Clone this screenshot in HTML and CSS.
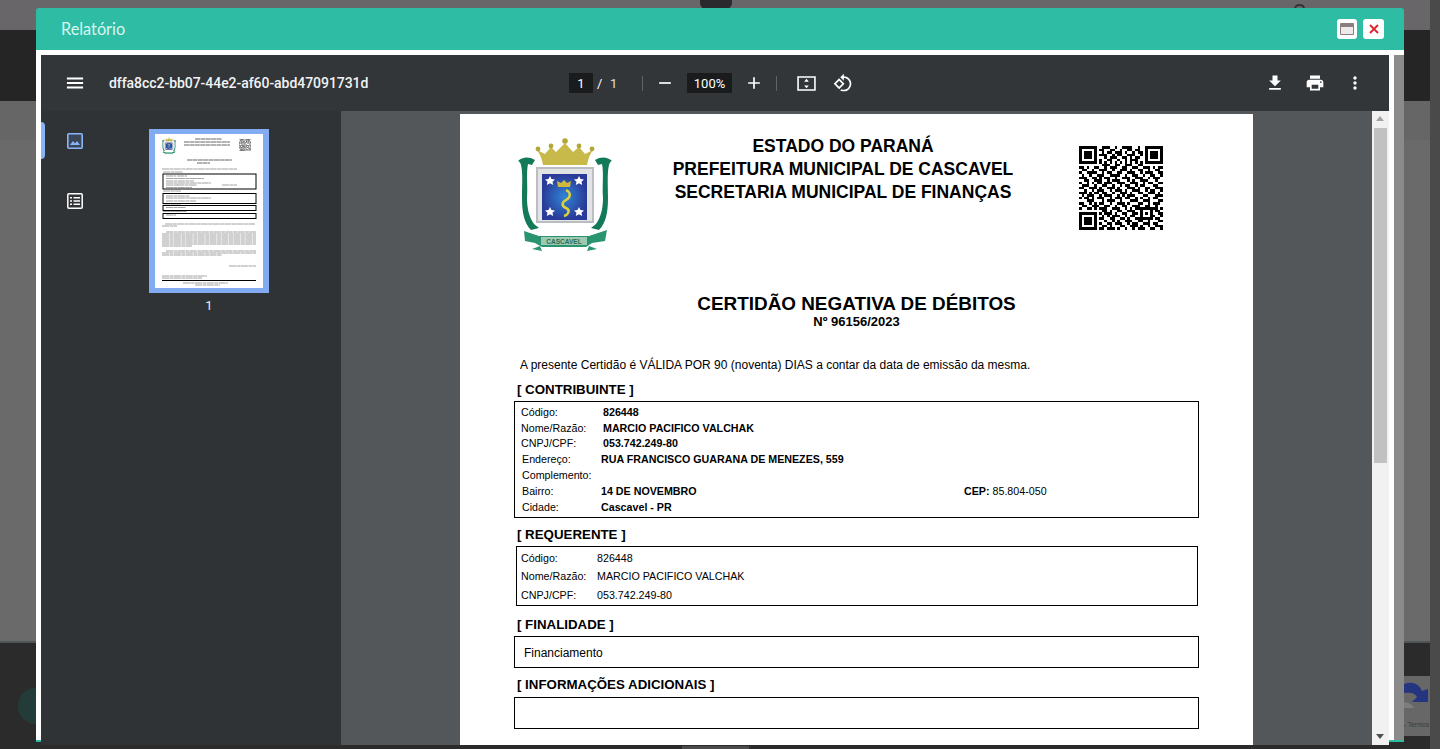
FILE: index.html
```html
<!DOCTYPE html>
<html lang="pt-BR">
<head>
<meta charset="utf-8">
<title>Relatório</title>
<link rel="stylesheet" href="styles.css">
</head>
<body>
<svg class="defs" aria-hidden="true">
  <radialGradient id="shield">
    <stop offset="0" stop-color="#2f86d6"/>
    <stop offset="1" stop-color="#2a3a98"/>
  </radialGradient>
  <symbol id="seal" viewBox="515 136 100 120">
    <path d="M518 161c4-4 11-5 17-1l-3 5-4-1c-2 9 0 22-1 34 0 10 2 19 7 26l5 4-8 2c-7-7-9-18-9-32 0-12 1-25-1-33-1-3-2-4-3-4z" fill="#127a58"/>
    <path d="M612 161c-4-4-11-5-17-1l3 5 4-1c2 9 0 22 1 34 0 10-2 19-7 26l-5 4 8 2c7-7 9-18 9-32 0-12-1-25 1-33 1-3 2-4 3-4z" fill="#127a58"/>
    <path d="M524 231l15 5h50l18-6-2 11-13 2-6 4h-44l-7-4-10-2z" fill="#2a9470"/>
    <rect x="541" y="237" width="46" height="8" fill="#9cc9b2"/>
    <path d="M532 249l8-3 2 5zM597 249l-8-3-2 5z" fill="#2a9470"/>
    <path d="M543 165c-1-6-3-11-6-15l8 4 6-7 5 5 9-9 8 9 6-5 6 7 8-4c-3 4-5 9-6 15z" fill="#c7ba4a"/>
    <circle cx="538" cy="149" r="2.400" fill="#b3a739"/><circle cx="551" cy="146" r="2.400" fill="#b3a739"/><circle cx="565" cy="141" r="2.800" fill="#b3a739"/><circle cx="579" cy="146" r="2.400" fill="#b3a739"/><circle cx="592" cy="149" r="2.400" fill="#b3a739"/>
    <rect x="536" y="167" width="58" height="56" fill="#bcbdc0"/>
    <rect x="538" y="169" width="54" height="52" fill="#e2e3e5"/>
    <rect x="542" y="174" width="45" height="46" fill="url(#shield)"/>
    <path d="M550 176l1.500 3 3.500.4-2.500 2.300.7 3.300-3.200-1.700-3.200 1.700.7-3.300-2.500-2.300 3.500-.4zM579 176l1.500 3 3.500.4-2.500 2.300.7 3.300-3.200-1.700-3.200 1.700.7-3.300-2.500-2.300 3.500-.4zM550 207l1.500 3 3.500.4-2.500 2.300.7 3.300-3.200-1.700-3.200 1.700.7-3.300-2.500-2.300 3.500-.4zM579 207l1.500 3 3.500.4-2.500 2.300.7 3.300-3.200-1.700-3.200 1.700.7-3.300-2.500-2.300 3.500-.4z" fill="#fff"/>
    <path d="M558 187l-1-6 4 2 3-3 3 3 4-2-1 6z" fill="#d0b83a"/>
    <path d="M566 190c6 3 4 8 0 10s-5 6 0 8 2 7-2 8" fill="none" stroke="#dcd03e" stroke-width="2.500"/>
  </symbol>
  <symbol id="qr" viewBox="0 0 33 33">
    <path shape-rendering="crispEdges" fill="none" stroke="#000" d="M0 .5h7M9 .5h3M14 .5h1M17 .5h4M23 .5h1M26 .5h7
    M0 1.500h1M6 1.500h1M8 1.500h2M12 1.500h2M16 1.500h1M19 1.500h2M22 1.500h2M26 1.500h1M32 1.500h1
    M0 2.500h1M2 2.500h3M6 2.500h1M9 2.500h1M11 2.500h2M14 2.500h3M18 2.500h1M21 2.500h1M23 2.500h2M26 2.500h1M28 2.500h3M32 2.500h1
    M0 3.500h1M2 3.500h3M6 3.500h1M8 3.500h3M13 3.500h1M15 3.500h2M19 3.500h3M24 3.500h1M26 3.500h1M28 3.500h3M32 3.500h1
    M0 4.500h1M2 4.500h3M6 4.500h1M10 4.500h1M12 4.500h3M17 4.500h2M20 4.500h1M22 4.500h2M26 4.500h1M28 4.500h3M32 4.500h1
    M0 5.500h1M6 5.500h1M8 5.500h1M11 5.500h2M15 5.500h1M18 5.500h1M20 5.500h3M26 5.500h1M32 5.500h1
    M0 6.500h7M8 6.500h1M10 6.500h1M12 6.500h1M14 6.500h1M16 6.500h1M18 6.500h1M20 6.500h1M22 6.500h1M24 6.500h1M26 6.500h7
    M9 7.500h3M14 7.500h2M18 7.500h3M23 7.500h2
    M0 8.500h2M3 8.500h1M6 8.500h2M10 8.500h1M12 8.500h3M17 8.500h2M21 8.500h2M25 8.500h3M29 8.500h1M31 8.500h2
    M1 9.500h2M5 9.500h1M8 9.500h3M13 9.500h1M16 9.500h3M20 9.500h1M23 9.500h2M27 9.500h1M30 9.500h2
    M0 10.500h1M3 10.500h4M9 10.500h1M11 10.500h2M15 10.500h2M19 10.500h3M24 10.500h1M26 10.500h3M31 10.500h2
    M1 11.500h1M4 11.500h1M7 11.500h3M12 11.500h4M18 11.500h1M21 11.500h2M25 11.500h1M28 11.500h2M32 11.500h1
    M0 12.500h3M5 12.500h2M8 12.500h1M10 12.500h2M14 12.500h1M17 12.500h3M22 12.500h3M27 12.500h1M29 12.500h3
    M2 13.500h2M6 13.500h3M11 13.500h1M13 13.500h3M19 13.500h1M21 13.500h1M24 13.500h3M30 13.500h1
    M0 14.500h1M3 14.500h1M5 14.500h1M7 14.500h2M10 14.500h3M15 14.500h3M20 14.500h3M25 14.500h1M27 14.500h2M31 14.500h2
    M1 15.500h3M6 15.500h1M9 15.500h2M13 15.500h1M16 15.500h1M18 15.500h2M22 15.500h1M24 15.500h2M29 15.500h2
    M0 16.500h2M4 16.500h3M8 16.500h1M11 16.500h3M15 16.500h1M19 16.500h3M23 16.500h1M26 16.500h2M30 16.500h3
    M2 17.500h1M5 17.500h1M7 17.500h3M12 17.500h1M14 17.500h3M18 17.500h1M21 17.500h3M26 17.500h1M28 17.500h2M32 17.500h1
    M0 18.500h3M4 18.500h1M6 18.500h2M9 18.500h2M13 18.500h1M16 18.500h3M20 18.500h1M23 18.500h2M27 18.500h3M31 18.500h1
    M1 19.500h1M3 19.500h3M8 19.500h1M10 19.500h3M15 19.500h1M17 19.500h1M19 19.500h3M25 19.500h2M30 19.500h3
    M0 20.500h1M2 20.500h2M5 20.500h1M7 20.500h3M12 20.500h1M14 20.500h3M18 20.500h2M22 20.500h1M24 20.500h1M27 20.500h1M29 20.500h2
    M3 21.500h3M9 21.500h1M11 21.500h3M16 21.500h1M20 21.500h3M25 21.500h3M31 21.500h2
    M0 22.500h2M4 22.500h1M6 22.500h1M8 22.500h2M12 22.500h1M15 22.500h3M19 22.500h1M23 22.500h2M27 22.500h1M29 22.500h3
    M1 23.500h2M5 23.500h3M10 23.500h2M14 23.500h1M17 23.500h2M21 23.500h3M26 23.500h2M30 23.500h1
    M0 24.500h1M3 24.500h2M6 24.500h1M8 24.500h3M13 24.500h3M18 24.500h1M20 24.500h1M22 24.500h9M32 24.500h1
    M9 25.500h2M12 25.500h1M15 25.500h2M19 25.500h3M24 25.500h1M28 25.500h1M30 25.500h2
    M0 26.500h7M8 26.500h1M10 26.500h3M14 26.500h1M17 26.500h2M21 26.500h2M24 26.500h1M26 26.500h1M28 26.500h1M31 26.500h2
    M0 27.500h1M6 27.500h1M9 27.500h1M11 27.500h1M13 27.500h3M18 27.500h1M20 27.500h2M24 27.500h1M28 27.500h2M32 27.500h1
    M0 28.500h1M2 28.500h3M6 28.500h1M8 28.500h2M12 28.500h2M16 28.500h2M19 28.500h1M22 28.500h7M30 28.500h2
    M0 29.500h1M2 29.500h3M6 29.500h1M10 29.500h1M13 29.500h1M15 29.500h1M18 29.500h3M23 29.500h2M27 29.500h1M31 29.500h2
    M0 30.500h1M2 30.500h3M6 30.500h1M8 30.500h1M11 30.500h2M14 30.500h3M19 30.500h1M21 30.500h2M25 30.500h3M29 30.500h2
    M0 31.500h1M6 31.500h1M9 31.500h2M12 31.500h1M16 31.500h2M20 31.500h3M24 31.500h1M27 31.500h1M30 31.500h3
    M0 32.500h7M8 32.500h2M11 32.500h3M15 32.500h1M18 32.500h1M21 32.500h1M23 32.500h3M28 32.500h2M32 32.500h1"/>
  </symbol>
</svg>

<div class="backdrop">
  <div class="page-col">
    <div class="band band-top"><span class="pill"></span></div>
    <div class="band band-nav"></div>
    <div class="band band-sub"></div>
    <div class="band band-main"></div>
    <div class="band band-foot"><span class="foot-mark"></span></div>
  </div>
  <div class="page-scroll"></div>
</div>
<span class="top-mark"></span>
<span class="chat-dot"></span>
<div class="recaptcha">
  <svg viewBox="0 0 26 30" width="26" height="30"><path d="M0 4c9-3 15 0 18 7l6-2v13H8l5-5c-2-4-6-5-13-4z" fill="#26357f"/><path d="M0 22c5 1 8 2 10 6H0z" fill="#7d7d7d"/></svg>
  <span class="recaptcha-text">- Termos</span>
</div>

<div class="modal">
  <header class="modal-head">
    <span class="modal-title">Relatório</span>
    <div class="modal-actions">
      <button class="win-btn"><svg viewBox="0 0 14 12" width="14" height="12"><path d="M0 1a1 1 0 0 1 1-1h12a1 1 0 0 1 1 1v10a1 1 0 0 1-1 1H1a1 1 0 0 1-1-1zm1 3v7h12V4z" fill="#8a7f7f"/><path d="M1 4h12v7H1z" fill="#eceaea"/></svg></button>
      <button class="win-btn"><svg viewBox="0 0 10 10" width="10" height="10"><path d="M1 1l8 8M9 1l-8 8" stroke="#e0202c" stroke-width="1.800" fill="none"/></svg></button>
    </div>
  </header>
  <div class="modal-body">
    <div class="viewer">
      <div class="toolbar">
        <div class="tb-left">
          <svg class="tb-ico menu" viewBox="0 0 24 24"><path d="M3 18h18v-2H3v2zm0-5h18v-2H3v2zm0-7v2h18V6H3z"/></svg>
          <span class="doc-name">dffa8cc2-bb07-44e2-af60-abd47091731d</span>
        </div>
        <div class="tb-center">
          <span class="num-box page-box">1</span>
          <span class="slash">/</span>
          <span class="total">1</span>
          <span class="tb-sep sep-a"></span>
          <svg class="tb-ico minus" viewBox="0 0 24 24"><path d="M5 11h14v2H5z"/></svg>
          <span class="num-box zoom-box">100%</span>
          <svg class="tb-ico plus" viewBox="0 0 24 24"><path d="M19 13h-6v6h-2v-6H5v-2h6V5h2v6h6v2z"/></svg>
          <span class="tb-sep sep-b"></span>
          <svg class="tb-ico fit" viewBox="0 0 20 16"><path d="M1 1h18v14H1z" fill="none" stroke="#fff" stroke-width="1.700"/><path d="M10 3l2.500 3h-5zM10 13l-2.500-3h5z"/></svg>
          <svg class="tb-ico rotate" viewBox="0 0 24 24"><path d="M7.340 6.410L.860 12.900l6.490 6.480 6.490-6.480-6.500-6.490zM3.690 12.900l3.660-3.660L11 12.900l-3.660 3.660-3.650-3.660zm15.670-6.260C17.610 4.880 15.300 4 13 4V.760L8.760 5 13 9.240V6c1.790 0 3.580.680 4.950 2.050 2.730 2.730 2.730 7.170 0 9.900C16.580 19.320 14.790 20 13 20c-.970 0-1.940-.210-2.840-.610l-1.490 1.490C10.020 21.620 11.510 22 13 22c2.300 0 4.610-.880 6.360-2.640 3.520-3.510 3.520-9.210 0-12.720z"/></svg>
        </div>
        <div class="tb-right">
          <svg class="tb-ico" viewBox="0 0 24 24"><path d="M19 9h-4V3H9v6H5l7 7 7-7zM5 18v2h14v-2H5z"/></svg>
          <svg class="tb-ico" viewBox="0 0 24 24"><path d="M19 8H5c-1.660 0-3 1.340-3 3v6h4v4h12v-4h4v-6c0-1.660-1.340-3-3-3zm-3 11H8v-5h8v5zm3-7c-.550 0-1-.450-1-1s.450-1 1-1 1 .450 1 1-.450 1-1 1zm-1-9H6v4h12V3z"/></svg>
          <svg class="tb-ico" viewBox="0 0 24 24"><path d="M12 8c1.100 0 2-.900 2-2s-.900-2-2-2-2 .900-2 2 .900 2 2 2zm0 2c-1.100 0-2 .900-2 2s.900 2 2 2 2-.900 2-2-.900-2-2-2zm0 6c-1.100 0-2 .900-2 2s.900 2 2 2 2-.900 2-2-.900-2-2-2z"/></svg>
        </div>
      </div>
      <div class="workspace">
        <aside class="sidebar">
          <div class="rail">
            <div class="rail-btn active">
              <svg viewBox="0 0 16 16" width="16" height="16"><rect x=".8" y=".8" width="14.400" height="14.400" rx="1" fill="#3a4657" stroke="#8ab4f8" stroke-width="1.600"/><path d="M3 12l3-4 2 2.500L10 8l3 4z" fill="#8ab4f8"/></svg>
            </div>
            <div class="rail-btn">
              <svg viewBox="0 0 16 16" width="16" height="16"><rect x=".8" y=".8" width="14.400" height="14.400" rx="1" fill="none" stroke="#fff" stroke-width="1.500"/><path d="M3 4h2v1.500H3zM6.500 4H13v1.500H6.500zM3 7.300h2v1.500H3zM6.500 7.300H13v1.500H6.500zM3 10.600h2v1.500H3zM6.500 10.600H13v1.500H6.500z" fill="#fff"/></svg>
            </div>
          </div>
          <div class="thumb-pane">
            <svg class="thumb" viewBox="149 129 120 164" width="120" height="164">
              <rect x="149" y="129" width="120" height="164" fill="#83abf2"/>
              <rect x="155" y="134" width="108" height="154" fill="#fff"/>
              <use href="#seal" x="161" y="137" width="16" height="18"/>
              <use href="#qr" class="thumb-qr" x="239" y="139" width="12" height="12"/>
              <g class="thumb-head">
                <path d="M195 139h27M184 142h46M184 145h46M187 160h45M197 163h13"/>
              </g>
              <g class="thumb-text">
                <path d="M162 169h75M163 172h20M163 191h18M163 204h18M163 211.500h24M166 176h10M177 176h10M166 178.500h38M166 181h28M166 183h45M166 185h12M177 185h20M222 185h15M166 187.500h26M166 196h24M166 198h45M166 201h30M166 207.500h20M166 215h10"/>
                <path d="M165 224h90M162 226h15M166 232h90M162 234h94M162 236h94M162 238h94M162 240h94M162 242h94M162 244h94M162 246h30M166 251h90M162 253h94M162 255h60M229 266h27M162 276h45M162 278h40M183 283h45M195 285h25"/>
              </g>
              <g class="thumb-boxes">
                <rect x="163" y="174" width="93" height="15"/>
                <rect x="163" y="193.500" width="93" height="10"/>
                <rect x="163" y="205.500" width="93" height="5"/>
                <rect x="163" y="213.500" width="93" height="5"/>
              </g>
              <path d="M162 280.500h94" stroke="#000" stroke-width="1"/>
            </svg>
            <span class="thumb-num">1</span>
          </div>
        </aside>
        <main class="stage">
          <article class="sheet">
            <div class="sheet-head">
              <svg class="seal" viewBox="515 136 100 120">
                <use href="#seal" x="515" y="136" width="100" height="120"/>
                <text x="564" y="244" class="seal-label">CASCAVEL</text>
              </svg>
              <div class="gov">
                <div>ESTADO DO PARANÁ</div>
                <div>PREFEITURA MUNICIPAL DE CASCAVEL</div>
                <div>SECRETARIA MUNICIPAL DE FINANÇAS</div>
              </div>
              <svg class="qr"><use href="#qr"/></svg>
            </div>
            <h1 class="doc-title">CERTIDÃO NEGATIVA DE DÉBITOS</h1>
            <div class="doc-no">Nº 96156/2023</div>
            <p class="lead">A presente Certidão é VÁLIDA POR 90 (noventa) DIAS a contar da data de emissão da mesma.</p>

            <h2 class="sec sec-a">[ CONTRIBUINTE ]</h2>
            <div class="box box-a">
              <div class="row"><span class="lbl">Código:</span><b>826448</b></div>
              <div class="row"><span class="lbl">Nome/Razão:</span><b>MARCIO PACIFICO VALCHAK</b></div>
              <div class="row"><span class="lbl">CNPJ/CPF:</span><b>053.742.249-80</b></div>
              <div class="row shift"><span class="lbl">Endereço:</span><b>RUA FRANCISCO GUARANA DE MENEZES, 559</b></div>
              <div class="row shift"><span class="lbl">Complemento:</span></div>
              <div class="row shift"><span class="lbl">Bairro:</span><b class="val-wide">14 DE NOVEMBRO</b><span><b>CEP:</b> 85.804-050</span></div>
              <div class="row shift"><span class="lbl">Cidade:</span><b>Cascavel - PR</b></div>
            </div>

            <h2 class="sec sec-b">[ REQUERENTE ]</h2>
            <div class="box box-b">
              <div class="row"><span class="lbl">Código:</span><span>826448</span></div>
              <div class="row"><span class="lbl">Nome/Razão:</span><span>MARCIO PACIFICO VALCHAK</span></div>
              <div class="row"><span class="lbl">CNPJ/CPF:</span><span>053.742.249-80</span></div>
            </div>

            <h2 class="sec sec-c">[ FINALIDADE ]</h2>
            <div class="box box-c">Financiamento</div>

            <h2 class="sec sec-d">[ INFORMAÇÕES ADICIONAIS ]</h2>
            <div class="box box-d"></div>
          </article>
        </main>
        <div class="inner-scroll">
          <span class="arrow up"></span>
          <span class="inner-thumb"></span>
          <span class="arrow down"></span>
        </div>
      </div>
    </div>
    <div class="outer-scroll"></div>
  </div>
</div>
</body>
</html>
```
FILE: styles.css
```css
* { box-sizing: border-box; }
html, body { margin: 0; height: 749px; overflow: hidden; }
body { position: relative; background: #2b2b2b; font-family: "Liberation Sans", Arial, sans-serif; }
.defs { position: absolute; width: 0; height: 0; }

/* dimmed page behind the dialog */
.backdrop { display: flex; height: 749px; }
.page-col { flex: 1; display: flex; flex-direction: column; }
.page-scroll { width: 10px; background: #4a4a4a; }
.band { flex: none; }
.band-top { height: 30px; background: #686668; display: flex; justify-content: center; }
.pill { width: 32px; height: 9px; margin-left: 1px; background: #2a2a2e; border-radius: 0 0 6px 6px; }
.band-nav { height: 71px; background: #262525; }
.band-sub { height: 39px; background: #666; }
.band-main { height: 503px; background: #6a6a6a; border-bottom: 2px solid #4f5557; }
.band-foot { height: 106px; background: #2c2b2b; display: flex; justify-content: center; align-items: flex-end; }
.foot-mark { width: 67px; height: 3px; margin-bottom: 0; background: #4a4a4a; }
.top-mark { position: absolute; left: 1294px; top: 4px; width: 11px; height: 5px; border: 2px solid #333; border-bottom: 0; border-radius: 6px 6px 0 0; }
.chat-dot { position: absolute; left: 18px; top: 688px; width: 36px; height: 36px; border-radius: 50%; background: #243c39; }
.recaptcha { position: absolute; left: 1404px; top: 676px; width: 26px; height: 60px; background: #676767; overflow: hidden; padding-top: 4px; }
.recaptcha svg { display: block; }
.recaptcha-text { display: block; font-size: 6.500px; line-height: 10px; margin-top: 10px; color: #3a3a3a; white-space: nowrap; }

/* dialog */
.modal { position: absolute; left: 36px; top: 8px; width: 1368px; height: 734px; background: #2fbca5; border-radius: 3px 3px 0 0; }
.modal-head { height: 42px; display: flex; align-items: center; justify-content: space-between; padding: 0 20px 0 25px; }
.modal-title { font-family: Lato, sans-serif; font-size: 16.300px; color: #d9f6ef; margin-bottom: 1px; }
.modal-actions { display: flex; gap: 6px; }
.win-btn { width: 20px; height: 20px; padding: 0; border: 0; border-radius: 3px; background: #fff; display: flex; align-items: center; justify-content: center; }
.win-btn:last-child { width: 21px; }
.modal-body { height: 690px; background: #fff; padding: 5px 0 0 5px; display: flex; gap: 5px; }
.viewer { width: 1348px; height: 690px; flex: none; display: flex; flex-direction: column; background: #323639; position: relative; }
.outer-scroll { flex: 1; background: #8b8b8b; margin-top: 0; }

/* pdf toolbar */
.toolbar { height: 56px; flex: none; position: relative; display: flex; align-items: center; background: #323639; color: #fff; font-family: Roboto, sans-serif; }
.tb-ico { width: 20px; height: 20px; fill: #fff; display: block; flex: none; }
.tb-left { display: flex; align-items: center; padding-left: 24px; }
.menu { width: 20px; height: 20px; transform: scale(1.080); }
.doc-name { margin-left: 24px; font-size: 14px; font-weight: 500; letter-spacing: -.05px; white-space: nowrap; color: #f1f3f4; }
.tb-center { position: absolute; left: 528px; top: 0; height: 56px; display: flex; align-items: center; font-size: 13px; }
.num-box { height: 20px; background: #191b1c; display: flex; align-items: center; justify-content: center; }
.page-box { width: 24px; }
.slash { margin-left: 4px; width: 13px; }
.total { width: 10px; color: #dfe1e3; }
.tb-sep { width: 1px; height: 15px; background: #5f6368; }
.sep-a { margin-left: 22px; }
.minus { margin-left: 12px; width: 20px; height: 20px; }
.zoom-box { width: 45px; margin-left: 12px; }
.plus { margin-left: 12px; }
.sep-b { margin-left: 12px; }
.fit { margin-left: 20px; width: 19px; height: 15px; }
.rotate { margin-left: 17px; }
.tb-right { position: absolute; right: 24px; top: 0; height: 56px; display: flex; align-items: center; gap: 20px; }

/* workspace */
.workspace { flex: 1; min-height: 0; display: flex; }
.sidebar { width: 300px; flex: none; display: flex; background: #2f3336; }
.rail { width: 68px; flex: none; }
.rail-btn { height: 60px; display: flex; align-items: center; justify-content: center; position: relative; }
.rail-btn.active::before { content: ""; position: absolute; left: 0; top: 11px; width: 4px; height: 37px; background: #8ab4f8; border-radius: 0 4px 4px 0; }
.thumb-pane { width: 200px; flex: none; padding-top: 18px; display: flex; flex-direction: column; align-items: center; }
.thumb { display: block; }
.thumb-head path { fill: none; stroke: #555; stroke-width: .9; stroke-dasharray: 5 .4; }
.thumb-text path { fill: none; stroke: #8c8c8c; stroke-width: .8; stroke-dasharray: 7 .5 4 .4; }
.thumb-boxes rect { fill: none; stroke: #000; stroke-width: 1; }
.thumb-qr { opacity: .75; }
.thumb-num { margin-top: 5px; font-family: Roboto, sans-serif; font-size: 13px; line-height: 16px; color: #e8eaed; }
.stage { flex: 1; min-width: 0; background: #53575a; overflow: hidden; padding: 3px 0 0 119px; }
.inner-scroll { width: 17px; flex: none; background: #f1f1f1; display: flex; flex-direction: column; align-items: center; position: relative; }
.arrow { position: absolute; left: 4px; width: 0; height: 0; border-left: 4.500px solid transparent; border-right: 4.500px solid transparent; }
.arrow.up { top: 5px; border-bottom: 5px solid #a3a3a3; }
.arrow.down { bottom: 6px; border-top: 5px solid #505050; }
.inner-thumb { width: 13px; height: 335px; margin-top: 17px; background: #c1c1c1; }

/* pdf sheet */
.sheet { width: 793px; height: 720px; background: #fff; padding: 21px 54px 0; color: #000; }
.sheet-head { display: flex; align-items: flex-start; height: 121px; }
.seal { width: 100px; height: 120px; margin: 1px 0 0 1px; flex: none; }
.seal-label { font-family: "Liberation Sans", sans-serif; font-size: 6.500px; fill: #2c6a50; text-anchor: middle; font-weight: bold; }
.gov { width: 456px; flex: none; text-align: center; font-size: 17.500px; font-weight: bold; line-height: 23px; }
.qr { width: 84px; height: 84px; margin: 11px 0 0 8px; flex: none; }
.doc-title { margin: 37px 0 0; text-align: center; font-size: 18.900px; line-height: 22px; font-weight: bold; }
.doc-no { text-align: center; font-size: 13px; line-height: 14px; font-weight: bold; }
.lead { margin: 29px 0 0 6px; font-size: 12px; line-height: 14px; }
.sec { margin: 0 0 0 3px; font-size: 13.300px; line-height: 16px; font-weight: bold; }
.sec-a { margin-top: 10px; }
.sec-b { margin-top: 9px; }
.sec-c { margin-top: 11px; }
.sec-d { margin-top: 9px; }
.box { border: 1px solid #000; font-size: 10.700px; }
.row { display: flex; align-items: center; }
.box-a { height: 117px; margin-top: 3px; padding: 2px 0 0 6px; }
.box-a .row { height: 15.800px; }
.box-a .lbl { width: 82px; }
.box-a .shift { margin-left: 1px; }
.box-a .shift .lbl { width: 79px; }
.val-wide { width: 363px; }
.box-b { height: 60px; margin: 3px 1px 0 2px; padding: 2px 0 0 4px; }
.box-b .row { height: 18.300px; }
.box-b .lbl { width: 76px; }
.box-c { height: 32px; margin-top: 3px; padding: 1px 0 0 9px; display: flex; align-items: center; font-size: 12px; }
.box-d { height: 32px; margin-top: 4px; }
```
